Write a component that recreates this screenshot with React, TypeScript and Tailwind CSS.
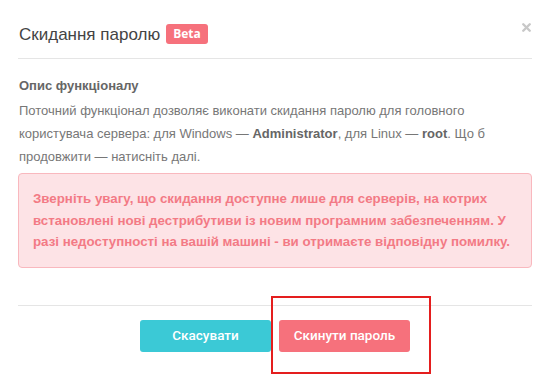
import { X } from "lucide-react";

export default function App() {
    return (
        <div className="w-[547px] h-[377px] bg-white overflow-hidden relative font-['Liberation_Sans',Arial,sans-serif]">
            <div className="pl-[18px] pr-[15px]">
                <div className="flex items-center h-[59px] pt-[10px] border-b border-[#e5e5e5] relative">
                    <h2 className="text-[17px] text-[#444] leading-none pl-px">Скидання паролю</h2>
                    <span className="ml-[6px] h-[20px] px-[7px] rounded-[3px] bg-[#f6717c] text-white text-[12px] font-bold flex items-center font-['Open_Sans',sans-serif]">
                        Beta
                    </span>
                    <X className="absolute right-[-1px] top-[21px] w-[13px] h-[13px] text-[#c8c8c8]" strokeWidth={4.5} />
                </div>

                <div className="pt-[18px]">
                    <h3 className="text-[13px] font-bold text-[#666] leading-[18px] pl-px">Опис функціоналу</h3>
                    <p className="mt-[4px] text-[13px] text-[#777] leading-[23px] pl-px">
                        Поточний функціонал дозволяє виконати скидання паролю для головного користувача сервера: для Windows — <b className="text-[#666]">Administrator</b>, для Linux — <b className="text-[#666]">root</b>. Що б продовжити — натисніть далі.
                    </p>
                    <div className="mt-[5px] border border-[#f9b8be] bg-[#fde3e6] rounded-[4px] px-[14px] py-[14px]">
                        <p className="text-[13.3px] font-bold text-[#f37a85] leading-[21.5px]">
                            Зверніть увагу, що скидання доступне лише для серверів, на котрих встановлені нові дестрибутиви із новим програмним забезпеченням. У разі недоступності на вашій машині - ви отримаєте відповідну помилку.
                        </p>
                    </div>
                </div>

                <div className="mt-[37px] border-t border-[#e5e5e5] pt-[14px] flex justify-center gap-[8px]">
                    <button className="w-[131px] h-[32px] rounded-[3px] bg-[#3bc9d6] text-white text-[13.5px] font-['Roboto',sans-serif] font-medium">
                        Скасувати
                    </button>
                    <button className="w-[131px] h-[32px] rounded-[3px] bg-[#f6717c] text-white text-[13.5px] font-['Roboto',sans-serif] font-medium">
                        Скинути пароль
                    </button>
                </div>
            </div>

            <div className="absolute left-[271px] top-[296px] w-[160px] h-[78px] border-2 border-[#e41e1e]" />
        </div>
    );
}
